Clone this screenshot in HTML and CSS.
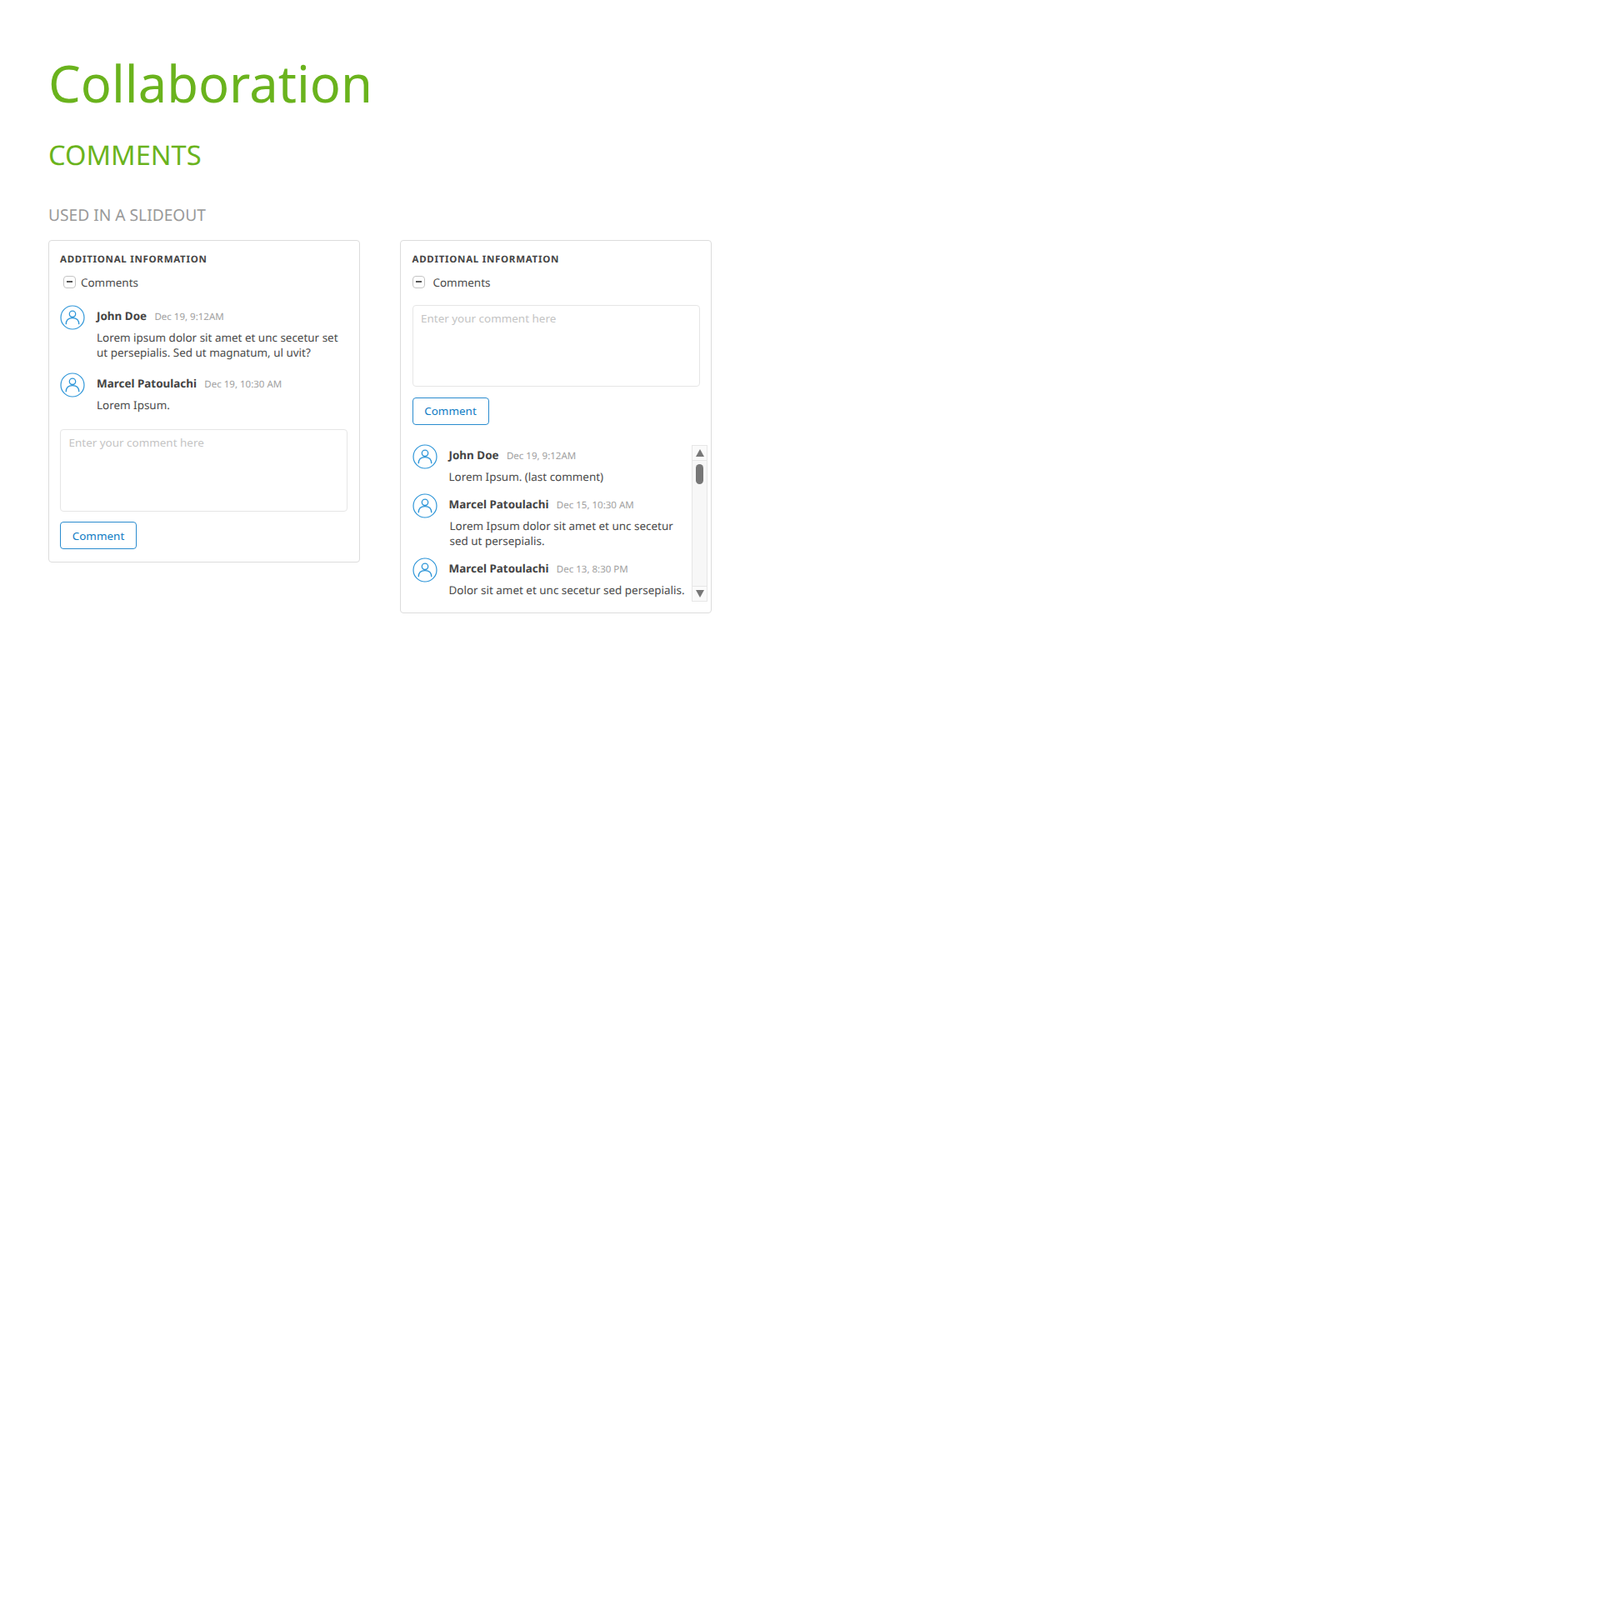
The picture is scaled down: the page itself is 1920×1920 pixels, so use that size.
FILE: index.html
```html
<!DOCTYPE html>
<html lang="en">
<head>
    <meta charset="UTF-8">
    <title>Collaboration</title>
    <link rel="stylesheet" href="styles.css">
</head>

<body>
    <svg class="icon-defs" width="0" height="0">
        <symbol id="avatar" viewBox="0 0 30 30">
            <circle cx="15" cy="15" r="14" fill="none" stroke="#2f96d8" stroke-width="1.2"/>
            <circle cx="15" cy="10.8" r="3.7" fill="none" stroke="#2f96d8" stroke-width="1.3"/>
            <path d="M7.2 23.2c0-5 3.2-7.6 7.8-7.6s7.8 2.6 7.8 7.6" fill="none" stroke="#2f96d8" stroke-width="1.3"/>
        </symbol>
    </svg>

    <h1>Collaboration</h1>
    <h2>COMMENTS</h2>
    <h3>USED IN A SLIDEOUT</h3>

    <div class="cards">
        <div class="card card-short">
            <h4>ADDITIONAL INFORMATION</h4>
            <div class="toggle indented"><span class="toggle-box"></span><span>Comments</span></div>

            <div class="comment-list first-list">
                <div class="comment">
                    <svg class="avatar"><use href="#avatar"/></svg>
                    <div class="comment-main">
                        <div class="comment-head"><b>John Doe</b><span class="date">Dec 19, 9:12AM</span></div>
                        <p>Lorem ipsum dolor sit amet et unc secetur set ut persepialis. Sed ut magnatum, ul uvit?</p>
                    </div>
                </div>
                <div class="comment">
                    <svg class="avatar"><use href="#avatar"/></svg>
                    <div class="comment-main">
                        <div class="comment-head"><b>Marcel Patoulachi</b><span class="date">Dec 19, 10:30 AM</span></div>
                        <p>Lorem Ipsum.</p>
                    </div>
                </div>
            </div>

            <textarea placeholder="Enter your comment here"></textarea>
            <button type="button">Comment</button>
        </div>

        <div class="card card-tall">
            <h4>ADDITIONAL INFORMATION</h4>
            <div class="toggle"><span class="toggle-box"></span><span>Comments</span></div>

            <textarea placeholder="Enter your comment here"></textarea>
            <button type="button">Comment</button>

            <div class="scroll-area">
                <div class="comment-list">
                    <div class="comment">
                        <svg class="avatar"><use href="#avatar"/></svg>
                        <div class="comment-main">
                            <div class="comment-head"><b>John Doe</b><span class="date">Dec 19, 9:12AM</span></div>
                            <p>Lorem Ipsum. (last comment)</p>
                        </div>
                    </div>
                    <div class="comment">
                        <svg class="avatar"><use href="#avatar"/></svg>
                        <div class="comment-main">
                            <div class="comment-head"><b>Marcel Patoulachi</b><span class="date">Dec 15, 10:30 AM</span></div>
                            <p class="nudge">Lorem Ipsum dolor sit amet et unc secetur sed ut persepialis.</p>
                        </div>
                    </div>
                    <div class="comment">
                        <svg class="avatar"><use href="#avatar"/></svg>
                        <div class="comment-main">
                            <div class="comment-head"><b>Marcel Patoulachi</b><span class="date">Dec 13, 8:30 PM</span></div>
                            <p>Dolor sit amet et unc secetur sed persepialis.</p>
                        </div>
                    </div>
                </div>

                <div class="scrollbar">
                    <div class="arrow-box"><span class="arrow-up"></span></div>
                    <div class="track"><span class="thumb"></span></div>
                    <div class="arrow-box"><span class="arrow-down"></span></div>
                </div>
            </div>
        </div>
    </div>
</body>
</html>
```

FILE: styles.css
```css
body {
    font-family: "Noto Sans", sans-serif;
    text-rendering: geometricPrecision;
    margin: 0;
    padding: 57.5px 0 0 58px;
    background-color: #fff;
    color: #4a4a4a;
}

.icon-defs {
    display: block;
    height: 0;
}

h1 {
    font-size: 61.44px;
    font-weight: 400;
    line-height: 84px;
    color: #6ab31d;
    margin: 0;
}

h2 {
    font-size: 32.64px;
    font-weight: 400;
    line-height: 46px;
    color: #6ab31d;
    margin: 21.5px 0 0 0;
}

h3 {
    font-size: 19.2px;
    font-weight: 400;
    line-height: 28px;
    color: #999;
    margin: 35px 0 0 0;
}

.cards {
    display: flex;
    align-items: flex-start;
    gap: 48px;
    margin-top: 16px;
}

.card {
    width: 374px;
    box-sizing: border-box;
    border: 1px solid #dcdcdc;
    border-radius: 4px;
    padding: 13.5px 13px 15px 13px;
}

.card-tall {
    padding: 13.5px 13px 12.5px 13.5px;
}

h4 {
    font-size: 11.52px;
    font-weight: 700;
    line-height: 18px;
    letter-spacing: 0.72px;
    color: #444;
    margin: 0;
}

.toggle {
    display: flex;
    align-items: center;
    font-size: 13.44px;
    line-height: 18px;
    gap: 10px;
    margin-top: 9px;
}

.toggle.indented {
    padding-left: 4px;
    gap: 6px;
}

.toggle-box {
    position: relative;
    width: 15px;
    height: 15px;
    box-sizing: border-box;
    border: 1.5px solid #c4c4c4;
    border-radius: 4px;
}

.toggle-box:before {
    content: "";
    position: absolute;
    left: 3px;
    right: 3px;
    top: 5px;
    height: 1.5px;
    background-color: #555;
}

.comment-list {
    display: flex;
    flex-direction: column;
    gap: 11px;
    flex: 1;
}

.first-list {
    gap: 15px;
    margin-top: 18px;
}

.comment {
    display: flex;
    gap: 14px;
}

.avatar {
    width: 30px;
    height: 30px;
    flex-shrink: 0;
}

.comment-main {
    flex: 1;
    min-width: 0;
}

.comment-head {
    font-size: 13.44px;
    line-height: 26px;
}

.comment-head b {
    font-weight: 700;
    color: #444;
}

.date {
    font-size: 11.52px;
    color: #a0a0a0;
    margin-left: 9.3px;
}

.comment p {
    font-size: 13.44px;
    line-height: 18px;
    margin: 2px 0 0 0;
}

.comment p.nudge {
    margin-left: 1px;
}

textarea {
    display: block;
    width: 345px;
    height: 98px;
    box-sizing: border-box;
    border: 1.5px solid #e6e6e6;
    border-radius: 4px;
    padding: 6px 9.5px;
    margin: 18px 0 0 0;
    font-family: "Noto Sans", sans-serif;
    font-size: 13.44px;
    line-height: 18px;
    resize: none;
    outline: none;
}

textarea::placeholder {
    color: #c4c4c4;
}

.card-short textarea {
    height: 99px;
    margin-top: 20.5px;
}

button {
    display: block;
    width: 92px;
    height: 33px;
    box-sizing: border-box;
    background-color: #fff;
    color: #0f7cc4;
    border: 1.5px solid #2a8ccf;
    border-radius: 4px;
    font-family: "Noto Sans", sans-serif;
    font-size: 13.44px;
    padding: 0;
    margin-top: 13px;
}

.card-short button {
    margin-top: 12px;
}

.scroll-area {
    display: flex;
    align-items: flex-start;
    gap: 8px;
    margin-top: 23.5px;
    margin-right: -9px;
}

.scrollbar {
    width: 19px;
    height: 188px;
    flex-shrink: 0;
    box-sizing: border-box;
    border: 1px solid #e6e6e6;
    display: flex;
    flex-direction: column;
    background-color: #f7f7f7;
    margin-top: 1px;
}

.arrow-box {
    height: 17px;
    display: flex;
    align-items: center;
    justify-content: center;
    background-color: #fafafa;
}

.arrow-up {
    border-left: 5px solid transparent;
    border-right: 5px solid transparent;
    border-bottom: 9px solid #777;
}

.arrow-down {
    border-left: 5px solid transparent;
    border-right: 5px solid transparent;
    border-top: 9px solid #777;
}

.track {
    flex: 1;
    border-top: 1px solid #e6e6e6;
    border-bottom: 1px solid #e6e6e6;
    padding: 4px 4px 0 4px;
}

.thumb {
    display: block;
    height: 24px;
    border-radius: 5px;
    background-color: #777;
}
```
